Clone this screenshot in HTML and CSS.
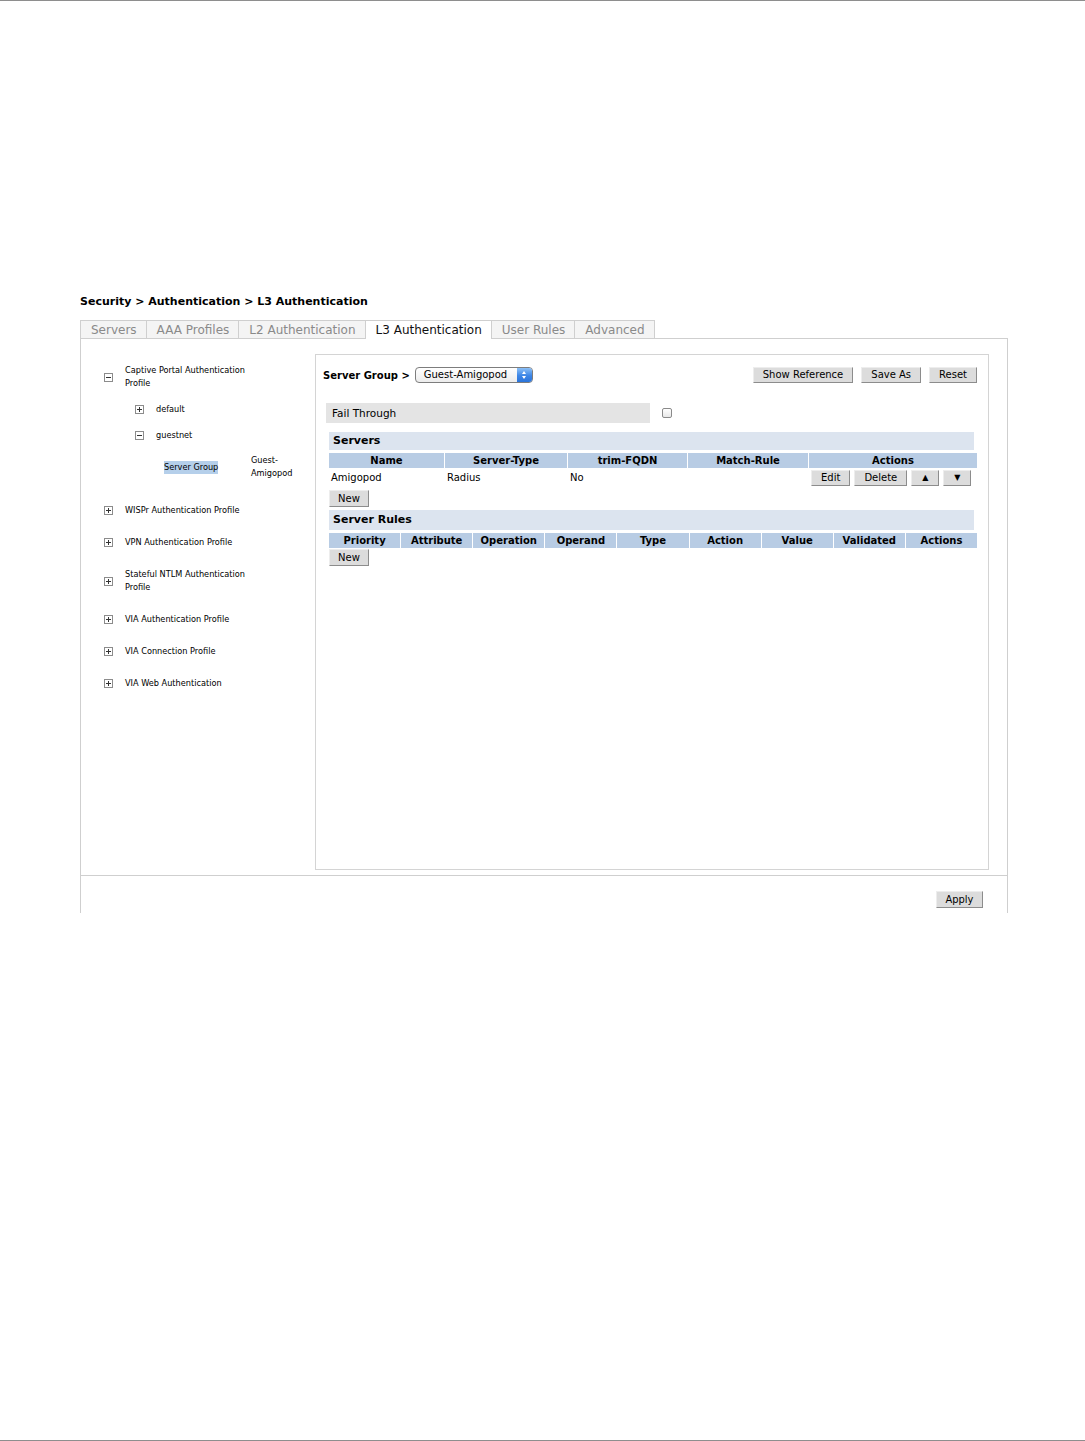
FILE: index.html
```html
<!DOCTYPE html>
<html lang="en">
<head>
  <meta charset="UTF-8" />
  <title>Security - L3 Authentication</title>
  <link rel="stylesheet" href="styles.css">
</head>
<body>
  <div class="page">
    <div class="content">
      <h1 class="crumb">Security &gt; Authentication &gt; L3 Authentication</h1>

      <ul class="tabs">
        <li>Servers</li>
        <li>AAA Profiles</li>
        <li>L2 Authentication</li>
        <li class="active">L3 Authentication</li>
        <li>User Rules</li>
        <li class="last">Advanced</li>
      </ul>

      <div class="panel">
        <div class="panel-body">
          <ul class="tree">
            <li>
              <div class="node">
                <svg class="toggle" width="9" height="9" viewBox="0 0 9 9"><rect x="0.5" y="0.5" width="8" height="8" fill="#fff" stroke="#8c8c8c"/><path d="M2 4.5h5" stroke="#333"/></svg>
                <span class="label">Captive Portal Authentication Profile</span>
              </div>
              <ul class="tree-sub">
                <li>
                  <div class="node">
                    <svg class="toggle" width="9" height="9" viewBox="0 0 9 9"><rect x="0.5" y="0.5" width="8" height="8" fill="#fff" stroke="#8c8c8c"/><path d="M2 4.5h5M4.5 2v5" stroke="#333"/></svg>
                    <span class="label">default</span>
                  </div>
                </li>
                <li>
                  <div class="node">
                    <svg class="toggle" width="9" height="9" viewBox="0 0 9 9"><rect x="0.5" y="0.5" width="8" height="8" fill="#fff" stroke="#8c8c8c"/><path d="M2 4.5h5" stroke="#333"/></svg>
                    <span class="label">guestnet</span>
                  </div>
                  <div class="leaf">
                    <span class="leaf-key">Server Group</span>
                    <span class="leaf-val">Guest-Amigopod</span>
                  </div>
                </li>
              </ul>
            </li>
            <li>
              <div class="node">
                <svg class="toggle" width="9" height="9" viewBox="0 0 9 9"><rect x="0.5" y="0.5" width="8" height="8" fill="#fff" stroke="#8c8c8c"/><path d="M2 4.5h5M4.5 2v5" stroke="#333"/></svg>
                <span class="label">WISPr Authentication Profile</span>
              </div>
            </li>
            <li>
              <div class="node">
                <svg class="toggle" width="9" height="9" viewBox="0 0 9 9"><rect x="0.5" y="0.5" width="8" height="8" fill="#fff" stroke="#8c8c8c"/><path d="M2 4.5h5M4.5 2v5" stroke="#333"/></svg>
                <span class="label">VPN Authentication Profile</span>
              </div>
            </li>
            <li>
              <div class="node">
                <svg class="toggle" width="9" height="9" viewBox="0 0 9 9"><rect x="0.5" y="0.5" width="8" height="8" fill="#fff" stroke="#8c8c8c"/><path d="M2 4.5h5M4.5 2v5" stroke="#333"/></svg>
                <span class="label">Stateful NTLM Authentication Profile</span>
              </div>
            </li>
            <li>
              <div class="node">
                <svg class="toggle" width="9" height="9" viewBox="0 0 9 9"><rect x="0.5" y="0.5" width="8" height="8" fill="#fff" stroke="#8c8c8c"/><path d="M2 4.5h5M4.5 2v5" stroke="#333"/></svg>
                <span class="label">VIA Authentication Profile</span>
              </div>
            </li>
            <li>
              <div class="node">
                <svg class="toggle" width="9" height="9" viewBox="0 0 9 9"><rect x="0.5" y="0.5" width="8" height="8" fill="#fff" stroke="#8c8c8c"/><path d="M2 4.5h5M4.5 2v5" stroke="#333"/></svg>
                <span class="label">VIA Connection Profile</span>
              </div>
            </li>
            <li>
              <div class="node">
                <svg class="toggle" width="9" height="9" viewBox="0 0 9 9"><rect x="0.5" y="0.5" width="8" height="8" fill="#fff" stroke="#8c8c8c"/><path d="M2 4.5h5M4.5 2v5" stroke="#333"/></svg>
                <span class="label">VIA Web Authentication</span>
              </div>
            </li>
          </ul>

          <div class="detail">
            <div class="toolbar">
              <span class="toolbar-title">Server Group &gt;</span>
              <span class="select">
                <span class="select-text">Guest-Amigopod</span>
                <span class="select-arrow">
                  <svg width="14" height="14" viewBox="0 0 14 14"><path d="M5 6l2-3 2 3z M5 8l2 3 2-3z" fill="#fff"/></svg>
                </span>
              </span>
              <div class="toolbar-actions">
                <button class="btn">Show Reference</button>
                <button class="btn">Save As</button>
                <button class="btn">Reset</button>
              </div>
            </div>

            <div class="field-row">
              <div class="field-label">Fail Through</div>
              <span class="checkbox"></span>
            </div>

            <div class="section-bar">Servers</div>
            <div class="grid servers-grid head">
              <div>Name</div>
              <div>Server-Type</div>
              <div>trim-FQDN</div>
              <div>Match-Rule</div>
              <div>Actions</div>
            </div>
            <div class="grid servers-grid data">
              <div>Amigopod</div>
              <div>Radius</div>
              <div>No</div>
              <div></div>
              <div class="row-actions">
                <button class="btn">Edit</button>
                <button class="btn">Delete</button>
                <button class="btn arrow">&#9650;</button>
                <button class="btn arrow">&#9660;</button>
              </div>
            </div>
            <button class="btn new">New</button>

            <div class="section-bar rules">Server Rules</div>
            <div class="grid rules-grid head">
              <div>Priority</div>
              <div>Attribute</div>
              <div>Operation</div>
              <div>Operand</div>
              <div>Type</div>
              <div>Action</div>
              <div>Value</div>
              <div>Validated</div>
              <div>Actions</div>
            </div>
            <button class="btn new rules-new">New</button>
          </div>
        </div>

        <div class="panel-foot">
          <button class="btn apply">Apply</button>
        </div>
      </div>
    </div>
  </div>
</body>
</html>
```

FILE: styles.css
```css
body {
  margin: 0;
  background: #fff;
  color: #000;
  font-family: "DejaVu Sans", Verdana, sans-serif;
}

.page {
  min-height: 1441px;
  box-sizing: border-box;
  border-top: 1px solid #8e8e8e;
  border-bottom: 1px solid #8e8e8e;
  padding-top: 294px;
}

.content {
  margin-left: 80px;
  width: 928px;
}

.crumb {
  margin: 0;
  font-size: 11px;
  font-weight: bold;
  line-height: 14px;
}

/* tabs */
.tabs {
  list-style: none;
  display: flex;
  margin: 11px 0 0;
  padding: 0;
}

.tabs li {
  box-sizing: border-box;
  height: 18px;
  line-height: 18px;
  padding: 0 9px 0 10px;
  border: 1px solid #cfcfcf;
  border-right: none;
  border-bottom: none;
  background: #f4f4f4;
  color: #8a8a8a;
  font-size: 12px;
}

.tabs li.last {
  border-right: 1px solid #cfcfcf;
}

.tabs li.active {
  position: relative;
  z-index: 1;
  height: 19px;
  margin-bottom: -1px;
  background: #fff;
  color: #111;
}

/* panel */
.panel {
  border: 1px solid #cfcfcf;
  border-bottom: none;
}

.panel-body {
  display: flex;
  padding: 15px 18px 5px 0;
}

.panel-foot {
  box-sizing: border-box;
  height: 38px;
  border-top: 1px solid #cfcfcf;
  display: flex;
  justify-content: flex-end;
  padding: 15px 24px 0 0;
}

/* tree */
.tree {
  list-style: none;
  box-sizing: border-box;
  width: 234px;
  margin: 0;
  padding: 10px 0 0 23px;
  display: flex;
  flex-direction: column;
  gap: 19px;
  font-family: "DejaVu Sans Condensed", Tahoma, sans-serif;
  font-size: 9.1px;
  line-height: 13px;
}

.tree-sub {
  list-style: none;
  margin: 13px 0 5px 31px;
  padding: 0;
  display: flex;
  flex-direction: column;
  gap: 13px;
}

.node {
  display: flex;
  align-items: center;
}

.toggle {
  flex: none;
  margin-right: 12px;
}

.label {
  max-width: 128px;
}

.leaf {
  display: flex;
  align-items: center;
  margin: 12px 0 0 29px;
}

.leaf-key {
  width: 87px;
  background: linear-gradient(#b5cfea, #b5cfea) no-repeat 0 0 / 54px 13px;
}

.leaf-val {
  width: 42px;
}

/* detail */
.detail {
  flex: 1;
  box-sizing: border-box;
  height: 516px;
  border: 1px solid #d4d4d4;
  padding: 12px 11px 0 7px;
  font-size: 10px;
}

.toolbar {
  display: flex;
  align-items: center;
  height: 16px;
}

.toolbar-title {
  font-weight: bold;
  margin-right: 5px;
}

.select {
  box-sizing: border-box;
  display: flex;
  align-items: center;
  width: 118px;
  height: 16px;
  border: 1px solid #7d7d7d;
  border-radius: 4px;
  background: linear-gradient(#fff, #ececec);
  overflow: hidden;
}

.select-text {
  flex: 1;
  padding-left: 8px;
  line-height: 14px;
}

.select-arrow {
  display: flex;
  align-items: center;
  justify-content: center;
  width: 15px;
  height: 14px;
  background: linear-gradient(#8cc0f7, #3d86e6 55%, #2b74da);
}

.toolbar-actions {
  margin-left: auto;
  display: flex;
  gap: 8px;
}

.btn {
  box-sizing: border-box;
  height: 16px;
  padding: 0 9px;
  margin: 0;
  font-family: "DejaVu Sans", Verdana, sans-serif;
  font-size: 10px;
  line-height: 14px;
  color: #000;
  background: #dcdcdc;
  border: 1px solid;
  border-color: #ededed #8c8c8c #8c8c8c #ededed;
  border-radius: 0;
}

.field-row {
  display: flex;
  align-items: center;
  margin: 20px 0 0 3px;
}

.field-label {
  width: 318px;
  height: 20px;
  line-height: 20px;
  padding-left: 6px;
  background: #e4e4e4;
  font-size: 10.5px;
}

.checkbox {
  box-sizing: border-box;
  width: 10px;
  height: 10px;
  margin-left: 12px;
  border: 1px solid #8a8a8a;
  border-radius: 2px;
  background: linear-gradient(#fff, #e8e8e8);
}

.section-bar {
  margin: 9px 3px 0 6px;
  height: 18px;
  line-height: 18px;
  padding-left: 4px;
  background: #dce4ef;
  font-size: 11px;
  font-weight: bold;
}

.section-bar.rules {
  margin-top: 3px;
  height: 20px;
  line-height: 20px;
}

.grid {
  display: grid;
  gap: 1px;
  margin-left: 6px;
}

.servers-grid {
  grid-template-columns: 115px 122px 119px 120px 1fr;
}

.rules-grid {
  grid-template-columns: repeat(9, 1fr);
}

.grid.head {
  margin-top: 3px;
}

.grid.head div {
  height: 15px;
  line-height: 15px;
  background: #b8cce4;
  font-weight: bold;
  text-align: center;
}

.grid.data div {
  height: 19px;
  line-height: 19px;
  padding-left: 2px;
}

.grid.data .row-actions {
  display: flex;
  align-items: center;
  gap: 4px;
}

.btn.arrow {
  width: 28px;
  padding: 0;
  font-size: 8px;
}

.btn.new {
  display: block;
  height: 17px;
  margin: 3px 0 0 6px;
  padding: 0 8px;
}

.btn.rules-new {
  margin-top: 1px;
}

.btn.apply {
  width: 47px;
  height: 17px;
  padding: 0;
  font-family: "DejaVu Sans Condensed", Tahoma, sans-serif;
  font-size: 11px;
}
```
